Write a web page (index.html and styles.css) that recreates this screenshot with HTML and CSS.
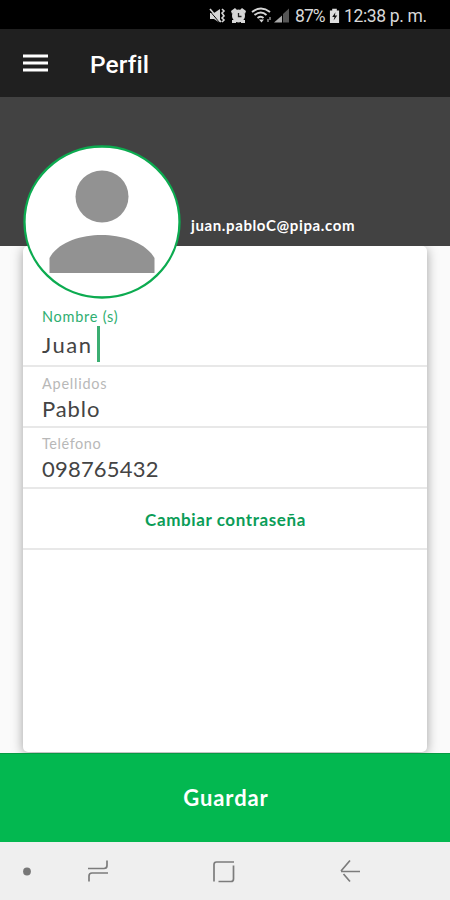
FILE: index.html
```html
<!DOCTYPE html>
<html lang="es">
<head>
<meta charset="utf-8">
<title>Perfil</title>
<link rel="stylesheet" href="styles.css">
</head>
<body>
<div class="screen">
  <div class="status">
    <svg class="status-icons" width="84" height="20" viewBox="0 0 84 20">
      <g fill="#d6d6d6">
        <path d="M1 7h4l6-4v14l-6-4H1z"/>
        <path d="M0 4l11 13" stroke="#000" stroke-width="1"/>
        <path d="M1 3l11 13" fill="none" stroke="#d6d6d6" stroke-width="1.600"/>
        <path d="M13 3l2 2-2 2 2 3-2 2 2 2-2 2" fill="none" stroke="#d6d6d6" stroke-width="1.600"/>
        <circle cx="29.500" cy="10" r="6.500"/>
        <path d="M22 5l4-3 2 2-5 4zM37 5l-4-3-2 2 5 4zM23 14h4v3h-4zM32 14h4v3h-4z"/>
        <path d="M29.500 7v3.500h3" fill="none" stroke="#222" stroke-width="1.300"/>
        <g fill="none" stroke="#d6d6d6" stroke-width="1.900">
          <path d="M43 6q9-7 18 0M45.500 9q6.500-5 12 0M48.500 12q3.500-2.500 6 0"/>
        </g>
        <path d="M50 13.500h5l-2.500 3z"/>
        <path d="M59 13v3M61 11v3" fill="none" stroke="#999" stroke-width="1.400"/>
        <path d="M65 16.500l8-7v7z" fill="#aaa"/>
        <path d="M74 8l6-5.500v14h-6z" fill="#555"/>
      </g>
    </svg>
    <span class="battery-level">87%</span>
    <svg class="battery" width="11" height="16" viewBox="0 0 12 16">
      <path d="M3.500 0h5v2H11v13.500H1V2h2.500z" fill="#ddd"/>
      <path d="M7 4L3.500 9H6l-1 4 4-5.500H6.500z" fill="#111"/>
    </svg>
    <span class="clock">12:38 p. m.</span>
  </div>
  <header class="appbar">
    <svg class="menu" width="25" height="18" viewBox="0 0 25 18"><path d="M0 2h25M0 9h25M0 16h25" stroke="#fff" stroke-width="2.800"/></svg>
    <h1 class="title">Perfil</h1>
  </header>
  <main class="content">
    <section class="hero">
      <svg class="avatar" width="158" height="154" viewBox="0 0 158 154">
        <ellipse cx="79" cy="77" rx="77.500" ry="75.500" fill="#fff" stroke="#0cab50" stroke-width="2.300"/>
        <ellipse cx="79" cy="51.500" rx="26.500" ry="26" fill="#929292"/>
        <path d="M26.500 128v-15C35 97 58 90 78.500 90S122 97 131.500 113v15z" fill="#929292"/>
      </svg>
      <span class="email">juan.pabloC@pipa.com</span>
    </section>
    <section class="card">
      <div class="field active">
        <span class="label">Nombre (s)</span>
        <span class="value juan">Juan<i class="caret"></i></span>
      </div>
      <div class="field surname">
        <span class="label">Apellidos</span>
        <span class="value">Pablo</span>
      </div>
      <div class="field">
        <span class="label telefono">Teléfono</span>
        <span class="value phone">098765432</span>
      </div>
      <div class="change"><span>Cambiar contraseña</span></div>
    </section>
  </main>
  <button class="save">Guardar</button>
  <nav class="nav">
    <svg width="450" height="58" viewBox="0 0 450 58" fill="none" stroke="#7c7c7c" stroke-width="1.700">
      <circle cx="27" cy="29.500" r="3.900" fill="#777" stroke="none"/>
      <path d="M88 26.500h16q3 0 3-3v-5M108 31H92q-3 0-3 3v5.500"/>
      <path d="M214 39.500V22.500q0-2.500 2.500-2.500H234M233.500 23.500V37q0 2.500-2.500 2.500h-12.500"/>
      <path d="M350 18.500l-9 10.500M343.500 32l6.500 7.500M341 29.500h19"/>
    </svg>
  </nav>
</div>
</body>
</html>
```
FILE: styles.css
```css
* { box-sizing: border-box; }
body { margin: 0; font-family: Lato, sans-serif; }
.screen { width: 450px; height: 900px; display: flex; flex-direction: column; overflow: hidden; background: #fafafa; }
.status { height: 29px; flex: none; background: #000; display: flex; align-items: center; padding: 2px 0 0 209px; color: #d8d8d8; font: 17.5px/20px Roboto, sans-serif; white-space: nowrap; }
.battery-level { width: 30px; margin-left: 2px; letter-spacing: -0.9px; }
.battery { margin-left: 4px; }
.clock { margin-left: 4px; letter-spacing: -0.35px; }
.appbar { height: 68px; flex: none; background: #202020; display: flex; align-items: center; padding-left: 23px; position: relative; box-shadow: 0 1px 3px rgba(0, 0, 0, .35); z-index: 1; }
.title { margin: 3px 0 0 42px; color: #fff; font: 500 24.5px/30px Roboto, sans-serif; letter-spacing: .1px; }
.content { height: 656px; flex: none; display: flex; flex-direction: column; overflow: hidden; }
.hero { height: 149px; flex: none; background: #424242; display: flex; align-items: flex-start; padding: 48px 0 0 23px; position: relative; z-index: 1; }
.avatar { flex: none; }
.email { margin: 70px 0 0 10px; color: #fff; font-size: 15px; line-height: 20px; font-weight: 700; letter-spacing: .62px; }
.card { width: 404px; height: 506px; flex: none; margin-left: 23px; background: #fff; border-radius: 5px; box-shadow: 0 2px 12px rgba(0, 0, 0, .36); }
.field { height: 61px; border-bottom: 2px solid #e8e8e8; padding: 7px 0 0 19px; display: flex; flex-direction: column; }
.surname { padding-top: 8px; }
.active { height: 121px; padding-top: 62px; }
.label { font-size: 14.5px; line-height: 18px; color: #b8b8b8; letter-spacing: .75px; }
.telefono { letter-spacing: .55px; }
.active .label { color: #2eae70; }
.value { font-size: 22px; line-height: 32px; color: #444; display: flex; align-items: center; letter-spacing: .9px; }
.juan { letter-spacing: 1.5px; }
.phone { letter-spacing: .2px; }
.active .value { height: 38px; }
.caret { width: 3px; height: 36px; margin: -2px 0 0 5px; background: #3bae72; }
.change { height: 61px; border-bottom: 2px solid #e8e8e8; display: flex; align-items: center; justify-content: center; color: #0b9d58; font-weight: 700; font-size: 17px; letter-spacing: .6px; padding: 2px 0 0 1px; }
.save { height: 89px; flex: none; border: 0; border-top: 1px solid #079b43; background: #03b850; color: #fff; font: 700 22px/28px Lato, sans-serif; letter-spacing: .9px; padding-left: 8px; position: relative; z-index: 2; }
.nav { height: 58px; flex: none; background: #efefef; }
```
